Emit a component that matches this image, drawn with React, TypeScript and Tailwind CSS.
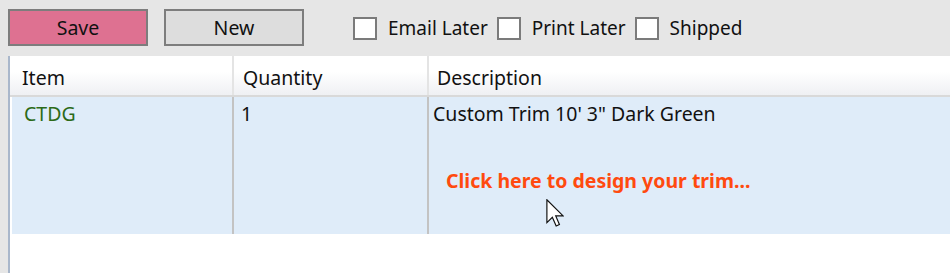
import React from 'react';

const font = { fontFamily: '"Noto Sans", "Open Sans", sans-serif' };

function Checkbox({ label }: { label: string }) {
  return (
    <label className="flex items-center gap-[11px] mr-[9px]">
      <span className="w-[24px] h-[23px] bg-white border-2 border-[#7b7b7b] box-border" />
      <span className="text-[19px] text-[#111] leading-none">{label}</span>
    </label>
  );
}

function Cursor() {
  return (
    <svg className="absolute left-[546px] top-[199px]" width="18" height="28" viewBox="0 0 12 19">
      <path
        d="M0.5 0.5 L0.5 16 L4.2 12.4 L6.8 18.3 L9 17.3 L6.5 11.5 L11.5 11.5 Z"
        fill="#fff"
        stroke="#111"
        strokeWidth="0.8"
        strokeLinejoin="miter"
      />
    </svg>
  );
}

export default function App() {
  return (
    <div className="relative w-[950px] h-[273px] bg-[#e6e6e6] flex flex-col overflow-hidden" style={font}>
      {/* Toolbar */}
      <div className="h-[56px] shrink-0 flex items-start pt-[9px] pl-[8px]">
        <button className="w-[140px] h-[37px] bg-[#de7191] border-2 border-[#7d7d7d] text-[19.5px] text-[#111] leading-none">
          Save
        </button>
        <button className="w-[140px] h-[37px] ml-[16px] bg-[#dddddd] border-2 border-[#7d7d7d] text-[19.5px] text-[#111] leading-none">
          New
        </button>
        <div className="flex items-center ml-[49px] h-[31px] mt-[4px]">
          <Checkbox label="Email Later" />
          <Checkbox label="Print Later" />
          <Checkbox label="Shipped" />
        </div>
      </div>

      {/* Grid */}
      <div className="flex-1 ml-[8px] border-l-2 border-[#a9b7cb] bg-white flex flex-col">
        <div className="h-[41px] shrink-0 flex bg-gradient-to-b from-white from-40% to-[#eff0f3] border-b-2 border-[#d9d9d9] text-[19.5px] text-[#111]">
          <div className="w-[224px] pl-[12px] pt-[7px] border-r-2 border-[#e4e4e4]">Item</div>
          <div className="w-[195px] pl-[9px] pt-[7px] border-r-2 border-[#e4e4e4]">Quantity</div>
          <div className="flex-1 pl-[8px] pt-[7px]">Description</div>
        </div>
        <div className="h-[137px] shrink-0 ml-[2px] flex bg-[#dfecf9] text-[19.5px]">
          <div className="w-[222px] pl-[12px] pt-[2px] text-[#2c6a17] border-r-2 border-[#c3c3c3]">CTDG</div>
          <div className="w-[195px] pl-[7px] pt-[2px] text-[#111] border-r-2 border-[#c3c3c3]">1</div>
          <div className="flex-1 pl-[4px] pt-[2px] flex flex-col">
            <span className="text-[#111]">Custom Trim 10' 3" Dark Green</span>
            <span className="mt-[38px] pl-[13px] font-bold text-[#ff4a0f]">Click here to design your trim...</span>
          </div>
        </div>
      </div>

      <Cursor />
    </div>
  );
}
